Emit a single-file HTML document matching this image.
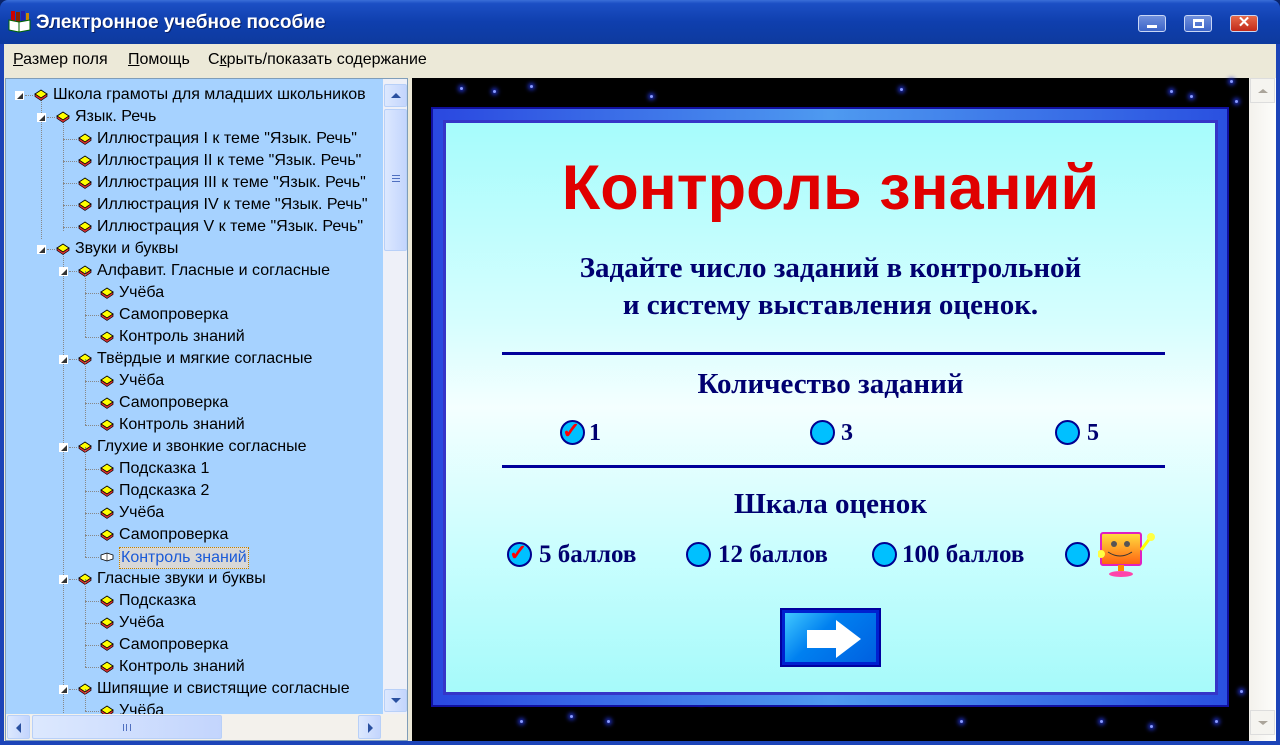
<!DOCTYPE html>
<html><head><meta charset="utf-8"><style>
*{margin:0;padding:0;box-sizing:border-box}
body{width:1280px;height:745px;overflow:hidden;position:relative;background:#0a246a;font-family:"Liberation Sans",sans-serif}
.abs{position:absolute}
#title{left:0;top:0;width:1280px;height:44px;background:linear-gradient(#3a6fd8 0,#1c4fc4 8%,#0f3fae 50%,#0d3a9e 100%);border-radius:8px 8px 0 0}
#title .t{left:36px;top:12px;color:#fff;font-weight:bold;font-size:19px;text-shadow:1px 1px #0a1e60}
.wb{top:15px;width:28px;height:17px;border:1px solid #c8d6f5;border-radius:3px;background:linear-gradient(#6f8fdc,#3c64c8)}
#menu{left:4px;top:44px;width:1272px;height:33px;background:#ece9d8;font-size:16px}
#menu span{position:absolute;top:7px}
#left{left:5px;top:78px;width:403px;height:663px;background:#a6d2ff;border:1px solid #7f9db9;overflow:hidden}
.row{position:absolute;height:22px;font-size:16px;line-height:22px;white-space:nowrap;color:#000}
.exp{position:absolute;width:9px;height:9px;background:#fff}
.exp:after{content:"";position:absolute;right:1px;bottom:1px;border-left:6px solid transparent;border-bottom:6px solid #333}
.bk{position:absolute;width:14px;height:12px}
.vd{position:absolute;border-left:1px dotted #888}
.hd{position:absolute;border-top:1px dotted #888;height:0}
#right{left:412px;top:78px;width:837px;height:663px;background:#000}
#rsb{left:1249px;top:78px;width:27px;height:663px;background:linear-gradient(90deg,#f3f1ec,#fdfdfb)}
.sbtn{position:absolute;border:1px solid #b8d0f8;border-radius:2px;background:linear-gradient(90deg,#dce8fe,#c3d5fd)}
.star{position:absolute;width:3px;height:3px;border-radius:50%;background:#8899ff;box-shadow:0 0 4px 2px #2233cc}
#frame{left:431px;top:107px;width:798px;height:600px;background:linear-gradient(90deg,#2a48e0,#4e9af0 50%,#2a50e0);border:2px solid #1010a0}
#card{left:443px;top:120px;width:775px;height:575px;background:linear-gradient(#a6fcfc 0,#d6fefe 35%,#f4ffff 50%,#cafefe 75%,#a6fafa 100%);border:3px solid #3535c8}
.serif{font-family:"Liberation Serif",serif;font-weight:bold;color:#000070}
.rad{position:absolute;width:25px;height:25px;border-radius:50%;background:#00c0ff;border:2px solid #000090}
.hr{position:absolute;left:502px;width:663px;height:3px;background:#00009a}
</style></head><body>
<div id="title" class="abs">
<svg class="abs" style="left:8px;top:10px" width="24" height="24" viewBox="0 0 24 24"><rect x="3" y="1" width="4" height="16" fill="#c00"/><rect x="8" y="2" width="4" height="15" fill="#820"/><rect x="13" y="1" width="4" height="16" fill="#22a"/><rect x="18" y="3" width="3" height="14" fill="#c80"/><path d="M1 10 L11 12 L11 22 L1 20Z" fill="#fff" stroke="#060"/><path d="M11 12 L22 10 L22 20 L11 22Z" fill="#fff" stroke="#060"/></svg>
<div class="abs t">Электронное учебное пособие</div>
<div class="abs wb" style="left:1138px"><div class="abs" style="left:8px;top:9px;width:10px;height:3px;background:#fff"></div></div>
<div class="abs wb" style="left:1184px"><div class="abs" style="left:8px;top:3px;width:11px;height:9px;border:2px solid #fff;border-top-width:3px"></div></div>
<div class="abs wb" style="left:1230px;background:linear-gradient(#e66a4a,#c22a1a)"><div class="abs" style="left:0;top:-3px;width:26px;text-align:center;color:#fff;font-weight:bold;font-size:15px">✕</div></div>
</div>
<div class="abs" style="left:0;top:44px;width:4px;height:701px;background:#1c44b8"></div>
<div class="abs" style="left:1276px;top:44px;width:4px;height:701px;background:#1c44b8"></div>
<div class="abs" style="left:0;top:741px;width:1280px;height:4px;background:#1c44b8"></div>
<div id="menu" class="abs">
<span style="left:9px"><u>Р</u>азмер поля</span>
<span style="left:124px"><u>П</u>омощь</span>
<span style="left:204px">С<u>к</u>рыть/показать содержание</span>
</div>
<div class="abs" style="left:4px;top:76px;width:1272px;height:665px;background:#ece9d8"></div>
<div id="left" class="abs">
<svg width="0" height="0" style="position:absolute"><defs><symbol id="b" viewBox="0 0 14 12"><path d="M1 5 L7 1 L13 5 L7 9Z" fill="#ff0" stroke="#000" stroke-width=".9"/><path d="M1 5 L1 7.5 L7 11.5 L13 7.5 L13 5 L7 9Z" fill="#d33" stroke="#000" stroke-width=".7"/></symbol><symbol id="ob" viewBox="0 0 14 12"><path d="M1 4 L7 2 L13 4 L13 8 L7 10 L1 8Z" fill="#fff" stroke="#000" stroke-width=".8"/><path d="M7 2 L7 10" stroke="#000" stroke-width=".6"/></symbol></defs></svg>
<div id="tree"></div>
<div class="abs" style="left:377px;top:0;width:25px;height:636px;background:#eef0f8"></div>
<div class="sbtn" style="left:378px;top:5px;width:23px;height:23px"><div class="abs" style="left:6px;top:8px;border-left:5px solid transparent;border-right:5px solid transparent;border-bottom:5px solid #2a50a0"></div></div>
<div class="sbtn" style="left:378px;top:30px;width:23px;height:142px"><div class="abs" style="left:7px;top:65px;width:8px;height:7px;border-top:1px solid #5070c0;border-bottom:1px solid #5070c0"></div><div class="abs" style="left:7px;top:68px;width:8px;height:1px;background:#5070c0"></div></div>
<div class="sbtn" style="left:378px;top:610px;width:23px;height:23px"><div class="abs" style="left:6px;top:8px;border-left:5px solid transparent;border-right:5px solid transparent;border-top:5px solid #2a50a0"></div></div>
<div class="abs" style="left:0;top:635px;width:402px;height:27px;background:#f3f1ec"></div>
<div class="sbtn" style="left:1px;top:636px;width:23px;height:24px"><div class="abs" style="left:8px;top:7px;border-top:5px solid transparent;border-bottom:5px solid transparent;border-right:5px solid #2a50a0"></div></div>
<div class="sbtn" style="left:26px;top:636px;width:190px;height:24px"><div class="abs" style="left:90px;top:8px;width:8px;height:7px;border-left:1px solid #5070c0;border-right:1px solid #5070c0"></div><div class="abs" style="left:93px;top:8px;width:1px;height:7px;background:#5070c0"></div></div>
<div class="sbtn" style="left:352px;top:636px;width:23px;height:24px"><div class="abs" style="left:9px;top:7px;border-top:5px solid transparent;border-bottom:5px solid transparent;border-left:5px solid #2a50a0"></div></div>
</div>
<div id="right" class="abs"></div>
<div id="stars"></div>
<div id="rsb" class="abs">
<div class="abs" style="left:1px;top:0;width:25px;height:25px;border:1px solid #ddd;background:#f5f4f0"><div class="abs" style="left:7px;top:10px;border-left:5px solid transparent;border-right:5px solid transparent;border-bottom:4px solid #aaa49a"></div></div>
<div class="abs" style="left:1px;top:632px;width:25px;height:25px;border:1px solid #ddd;background:#f5f4f0"><div class="abs" style="left:7px;top:10px;border-left:5px solid transparent;border-right:5px solid transparent;border-top:4px solid #aaa49a"></div></div>
</div>
<div id="frame" class="abs"></div>
<div id="card" class="abs"></div>
<div class="abs" style="left:443px;top:150px;width:775px;text-align:center;color:#e00000;font-weight:bold;font-size:63px;line-height:76px">Контроль знаний</div>
<div class="abs serif" style="left:443px;top:250px;width:775px;text-align:center;font-size:29px;line-height:37px">Задайте число заданий в контрольной<br>и систему выставления оценок.</div>
<div class="hr" style="top:352px"></div>
<div class="abs serif" style="left:443px;top:367px;width:775px;text-align:center;font-size:29px;line-height:34px">Количество заданий</div>
<div class="rad" style="left:560px;top:420px"></div><div class="abs" style="left:562px;top:418px;color:#f00;font-size:22px;font-weight:bold">✓</div>
<div class="abs serif" style="left:589px;top:420px;font-size:24px">1</div>
<div class="rad" style="left:810px;top:420px"></div><div class="abs serif" style="left:841px;top:420px;font-size:24px">3</div>
<div class="rad" style="left:1055px;top:420px"></div><div class="abs serif" style="left:1087px;top:420px;font-size:24px">5</div>
<div class="hr" style="top:465px"></div>
<div class="abs serif" style="left:443px;top:487px;width:775px;text-align:center;font-size:29px;line-height:34px">Шкала оценок</div>
<div class="rad" style="left:507px;top:542px"></div><div class="abs" style="left:509px;top:540px;color:#f00;font-size:22px;font-weight:bold">✓</div>
<div class="abs serif" style="left:539px;top:541px;font-size:25px">5 баллов</div>
<div class="rad" style="left:686px;top:542px"></div><div class="abs serif" style="left:718px;top:541px;font-size:25px">12 баллов</div>
<div class="rad" style="left:872px;top:542px"></div><div class="abs serif" style="left:902px;top:541px;font-size:25px">100 баллов</div>
<div class="rad" style="left:1065px;top:542px"></div>
<svg class="abs" style="left:1098px;top:530px" width="60" height="48" viewBox="0 0 60 48"><rect x="3" y="3" width="40" height="32" rx="2" fill="url(#gm)" stroke="#e020c0" stroke-width="2"/><defs><linearGradient id="gm" x1="0" y1="0" x2="0" y2="1"><stop offset="0" stop-color="#ffe040"/><stop offset="1" stop-color="#ff6010"/></linearGradient></defs><circle cx="16" cy="14" r="3" fill="#555"/><circle cx="29" cy="14" r="3" fill="#555"/><path d="M10 22 Q22 30 34 22" stroke="#333" fill="none"/><rect x="20" y="35" width="6" height="6" fill="#f80"/><ellipse cx="23" cy="44" rx="12" ry="3" fill="#f4a"/><path d="M43 20 L52 8" stroke="#ff0" stroke-width="3"/><circle cx="53" cy="7" r="4" fill="#ff4"/><circle cx="3" cy="24" r="4" fill="#ff4"/></svg>
<div class="abs" style="left:780px;top:608px;width:101px;height:59px;background:#0020d0;border:2px solid #0000a0"><div class="abs" style="left:3px;top:3px;width:91px;height:49px;background:linear-gradient(135deg,#40c8ff,#0080f0 40%,#0060e0)"></div>
<svg class="abs" style="left:22px;top:10px" width="60" height="38" viewBox="0 0 60 38"><path d="M3 10 L32 10 L32 0 L57 19 L32 38 L32 28 L3 28Z" fill="#fff"/></svg></div>
<script>
var rows=[[0,1,"Школа грамоты для младших школьников"],[1,1,"Язык. Речь"],[2,0,'Иллюстрация I к теме "Язык. Речь"'],[2,0,'Иллюстрация II к теме "Язык. Речь"'],[2,0,'Иллюстрация III к теме "Язык. Речь"'],[2,0,'Иллюстрация IV к теме "Язык. Речь"'],[2,0,'Иллюстрация V к теме "Язык. Речь"'],[1,1,"Звуки и буквы"],[2,1,"Алфавит. Гласные и согласные"],[3,0,"Учёба"],[3,0,"Самопроверка"],[3,0,"Контроль знаний"],[2,1,"Твёрдые и мягкие согласные"],[3,0,"Учёба"],[3,0,"Самопроверка"],[3,0,"Контроль знаний"],[2,1,"Глухие и звонкие согласные"],[3,0,"Подсказка 1"],[3,0,"Подсказка 2"],[3,0,"Учёба"],[3,0,"Самопроверка"],[3,0,"Контроль знаний",1],[2,1,"Гласные звуки и буквы"],[3,0,"Подсказка"],[3,0,"Учёба"],[3,0,"Самопроверка"],[3,0,"Контроль знаний"],[2,1,"Шипящие и свистящие согласные"],[3,0,"Учёба"]];
var h="";var off=[[9,28,47],[31,50,69],[53,72,91],[75,94,113]];
h+='<div class="vd" style="left:35px;top:20px;height:140px"></div>';
h+='<div class="vd" style="left:57px;top:42px;height:110px"></div>';
h+='<div class="vd" style="left:57px;top:174px;height:460px"></div>';
rows.forEach(function(r,i){var y=5+i*22,o=off[r[0]];
if(r[1])h+='<div class="exp" style="left:'+o[0]+'px;top:'+(y+7)+'px"></div><div class="hd" style="left:'+(o[0]+10)+'px;width:8px;top:'+(y+11)+'px"></div>';
else h+='<div class="hd" style="left:'+(o[0]+4)+'px;width:14px;top:'+(y+11)+'px"></div>';
h+='<svg class="bk" style="left:'+o[1]+'px;top:'+(y+5)+'px"><use href="#'+(r[3]?'ob':'b')+'"/></svg>';
if(r[0]==3&&i<29)h+='<div class="vd" style="left:79px;top:'+(y-11)+'px;height:22px"></div>';
var st=r[3]?'background:#d8d8d8;border:1px dotted #c08000;color:#1a5ad8;padding:0 1px;line-height:20px;top:'+(y+1)+'px':'top:'+y+'px';
h+='<div class="row" style="left:'+o[2]+'px;'+st+'">'+r[2]+'</div>';});
document.getElementById('tree').innerHTML=h;
var s="",pts=[[460,87],[493,90],[530,85],[570,715],[607,720],[700,700],[960,720],[1150,725],[1170,90],[1190,95],[1230,80],[1235,100],[1240,690],[1215,720],[520,720],[650,95],[900,88],[1100,720]];
pts.forEach(function(p){s+='<div class="star" style="left:'+p[0]+'px;top:'+p[1]+'px"></div>'});
document.getElementById('stars').innerHTML=s;
</script>
</body></html>
